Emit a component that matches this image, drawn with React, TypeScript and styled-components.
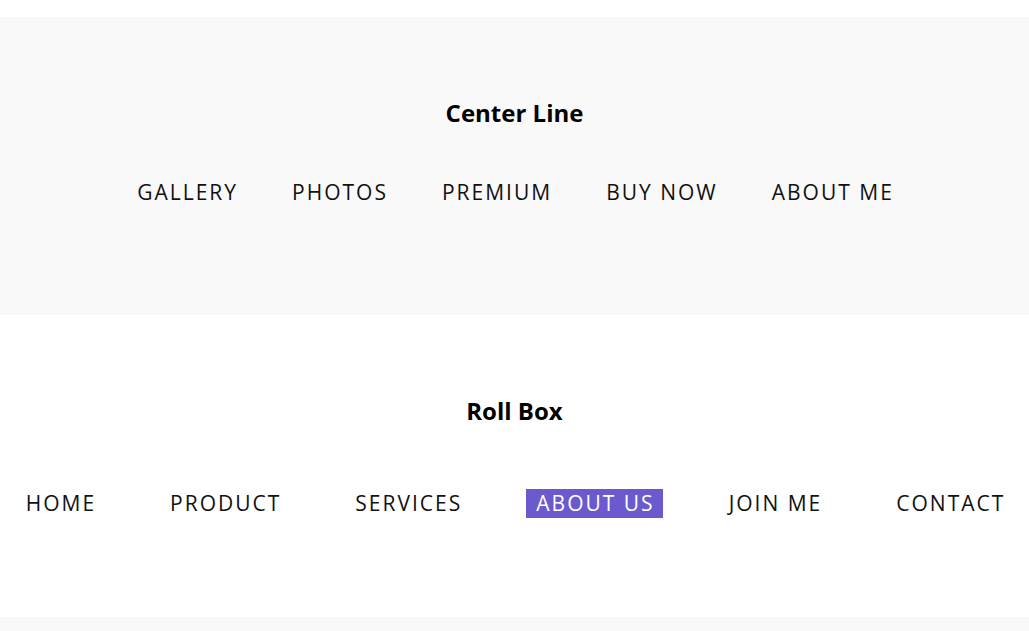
import React, { FC } from 'react';
import styled, { createGlobalStyle } from 'styled-components';

const GlobalStyle = createGlobalStyle`
    html, body {
        margin: 0;
        padding: 0;
        background: #ffffff;
    }
    body {
        font-family: 'Open Sans', 'Noto Sans', sans-serif;
        color: #111111;
    }
`;

const Page = styled.main`
    padding-top: 17px;
`;

const Section = styled.section<{ $shade?: boolean; $height: number }>`
    display: flex;
    flex-direction: column;
    align-items: center;
    height: ${(p) => p.$height}px;
    background: ${(p) => (p.$shade ? '#f9f9f9' : '#ffffff')};
`;

const Title = styled.h2`
    margin: 80px 0 0;
    font-size: 24px;
    line-height: 32px;
    font-weight: 700;
    color: #000000;
`;

const Nav = styled.nav<{ $top: number; $gap: number }>`
    display: flex;
    justify-content: center;
    gap: ${(p) => p.$gap}px;
    margin-top: ${(p) => p.$top}px;
`;

const NavLink = styled.a<{ $active?: boolean }>`
    display: block;
    padding: 0 8px 0 10px;
    font-size: 21px;
    line-height: 29px;
    letter-spacing: 2px;
    text-transform: uppercase;
    text-decoration: none;
    color: ${(p) => (p.$active ? '#ffffff' : '#111111')};
    background: ${(p) => (p.$active ? '#6a5acd' : 'transparent')};
`;

const centerLine = ['Gallery', 'Photos', 'Premium', 'Buy Now', 'About Me'];
const rollBox = ['Home', 'Product', 'Services', 'About Us', 'Join Me', 'Contact'];

const App: FC = () => {
    return (
        <Page>
            <GlobalStyle />
            <Section $shade $height={298}>
                <Title>Center Line</Title>
                <Nav $top={49} $gap={36}>
                    {centerLine.map((item) => (
                        <NavLink key={item} href="#">
                            {item}
                        </NavLink>
                    ))}
                </Nav>
            </Section>
            <Section $height={302}>
                <Title>Roll Box</Title>
                <Nav $top={62} $gap={56}>
                    {rollBox.map((item) => (
                        <NavLink key={item} href="#" $active={item === 'About Us'}>
                            {item}
                        </NavLink>
                    ))}
                </Nav>
            </Section>
            <Section $shade $height={14} />
        </Page>
    );
};

export default App;
